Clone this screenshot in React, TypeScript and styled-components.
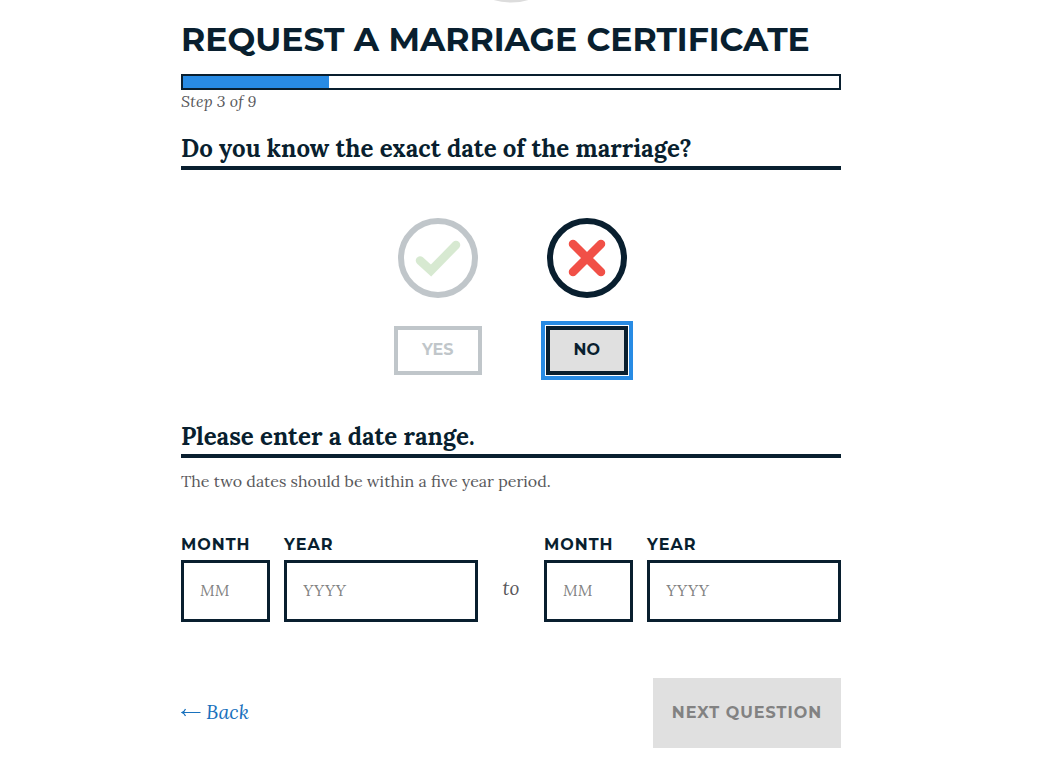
import React, { useState } from "react";
import styled, { createGlobalStyle } from "styled-components";

const navy = "#091f2f";
const blue = "#288be4";
const sans = `Montserrat, Inter, "Liberation Sans", sans-serif`;
const serif = `Lora, "Liberation Serif", serif`;

const GlobalStyle = createGlobalStyle`
  *, *::before, *::after { box-sizing: border-box; }
  body { margin: 0; background: #fff; color: ${navy}; font-family: ${serif}; }
`;

const Page = styled.div`
  padding: 0 35px 20px 0;
`;

const Column = styled.main`
  width: 100%;
  max-width: 660px;
  margin: 0 auto;
`;

const Seal = styled.svg`
  display: block;
  margin: 0 auto;
`;

const Title = styled.h1`
  margin: 16px 0 15px;
  font: 700 33px/40px ${sans};
  text-transform: uppercase;
`;

const Track = styled.div`
  height: 16px;
  border: 2px solid ${navy};
  background: #fff;
`;

const Fill = styled.div`
  height: 100%;
  background: ${blue};
`;

const StepText = styled.div`
  font-size: 16px;
  line-height: 22px;
  font-style: italic;
  color: #58585b;
`;

const Question = styled.h2`
  margin: 0;
  border-bottom: 4px solid ${navy};
  font-size: 24px;
  line-height: 34px;
  font-weight: 700;
`;

const Section = styled.section`
  margin-top: ${(p: { $gap: number }) => p.$gap}px;
`;

const Answers = styled.div`
  display: flex;
  justify-content: center;
  gap: 64px;
  margin-top: 48px;
`;

const Answer = styled.div<{ $faded: boolean }>`
  display: flex;
  flex-direction: column;
  align-items: center;
  gap: 28px;
  opacity: ${(p) => (p.$faded ? 0.25 : 1)};
`;

const AnswerButton = styled.button<{ $selected: boolean }>`
  height: 49px;
  padding: 0 24px 2px;
  border: 4px solid ${navy};
  background: ${(p) => (p.$selected ? "#e0e0e0" : "#fff")};
  color: ${navy};
  font: 700 16px/20px ${sans};
  text-transform: uppercase;
  outline: none;
  box-shadow: ${(p) => (p.$selected ? `0 0 0 1px #fff, 0 0 0 5px ${blue}` : "none")};
`;

const Hint = styled.p`
  margin: 12px 0 0;
  font-size: 16px;
  line-height: 22px;
  color: #58585b;
`;

const Range = styled.div`
  display: flex;
  align-items: flex-end;
  margin-top: 43px;
`;

const DatePair = styled.div`
  display: flex;
  flex: 1;
  min-width: 0;
  gap: 14px;
`;

const Field = styled.label<{ $short?: boolean }>`
  display: flex;
  flex-direction: column;
  gap: 5px;
  flex: ${(p) => (p.$short ? "0 0 89px" : "1")};
  min-width: 0;
  font: 700 16px/20px ${sans};
  letter-spacing: 1px;
  text-transform: uppercase;
`;

const Input = styled.input`
  width: 100%;
  height: 62px;
  padding: 0 16px 2px;
  border: 3px solid ${navy};
  border-radius: 0;
  background: #fff;
  color: ${navy};
  font: 400 16px/24px ${serif};
  &::placeholder { color: #828282; font-style: italic; opacity: 1; }
`;

const To = styled.span`
  flex: 0 0 66px;
  height: 62px;
  line-height: 56px;
  text-align: center;
  font-size: 19px;
  font-style: italic;
  color: #58585b;
`;

const Footer = styled.footer`
  display: flex;
  align-items: center;
  justify-content: space-between;
  margin-top: 56px;
`;

const BackLink = styled.a`
  display: inline-flex;
  align-items: center;
  gap: 5px;
  padding-bottom: 2px;
  color: #1871bd;
  font-size: 20px;
  line-height: 28px;
  font-style: italic;
  text-decoration: none;
`;

const NextButton = styled.button`
  min-width: 188px;
  height: 70px;
  padding: 0 16px;
  border: 0;
  background: #e0e0e0;
  color: #828282;
  font: 700 16px/20px ${sans};
  letter-spacing: 1px;
  text-transform: uppercase;
`;

function AnswerIcon({ kind }: { kind: "yes" | "no" }) {
  return (
    <svg width="80" height="80" viewBox="0 0 80 80" fill="none" aria-hidden="true">
      <circle cx="40" cy="40" r="37" stroke={navy} strokeWidth="6" />
      {kind === "yes" ? (
        <path d="M22 42.500 33 52.500 58 27" stroke="#62ac4b" strokeWidth="8.500" strokeLinecap="round" />
      ) : (
        <path d="M26 26 54 54M54 26 26 54" stroke="#f15047" strokeWidth="8.500" strokeLinecap="round" />
      )}
    </svg>
  );
}

function DateFields() {
  return (
    <DatePair>
      <Field $short>
        Month
        <Input placeholder="MM" maxLength={2} />
      </Field>
      <Field>
        Year
        <Input placeholder="YYYY" maxLength={4} />
      </Field>
    </DatePair>
  );
}

export default function App() {
  const [known, setKnown] = useState<"yes" | "no">("no");
  const step = 3;
  const total = 9;
  return (
    <>
      <GlobalStyle />
      <Page>
        <Seal width="60" height="3" viewBox="0 0 60 3" aria-hidden="true">
          <circle cx="30" cy="-56" r="57" fill="#f2f2f2" stroke="#dcdcdc" strokeWidth="3" />
        </Seal>
        <Column>
          <Title>Request a marriage certificate</Title>
          <Track role="progressbar" aria-label="Progress" aria-valuemin={0} aria-valuemax={total} aria-valuenow={step - 1}>
            <Fill style={{ width: `${((step - 1) / total) * 100}%` }} />
          </Track>
          <StepText>Step {step} of {total}</StepText>

          <Section $gap={20}>
            <Question>Do you know the exact date of the marriage?</Question>
            <Answers>
              {(["yes", "no"] as const).map((kind) => (
                <Answer key={kind} $faded={known !== kind}>
                  <AnswerIcon kind={kind} />
                  <AnswerButton type="button" $selected={known === kind} aria-pressed={known === kind} onClick={() => setKnown(kind)}>
                    {kind}
                  </AnswerButton>
                </Answer>
              ))}
            </Answers>
          </Section>

          <Section $gap={45}>
            <Question>Please enter a date range.</Question>
            <Hint>The two dates should be within a five year period.</Hint>
            <Range>
              <DateFields />
              <To>to</To>
              <DateFields />
            </Range>
          </Section>

          <Footer>
            <BackLink href="#back">
              <svg width="20" height="12" viewBox="0 0 20 12" fill="none" stroke="currentColor" strokeWidth="1.2" aria-hidden="true">
                <path d="M19.500 6.500H1M4.500 3Q3.500 5.500 1 6.500Q3.500 7.500 4.500 10" />
              </svg>
              Back
            </BackLink>
            <NextButton type="button" disabled>Next question</NextButton>
          </Footer>
        </Column>
      </Page>
    </>
  );
}
